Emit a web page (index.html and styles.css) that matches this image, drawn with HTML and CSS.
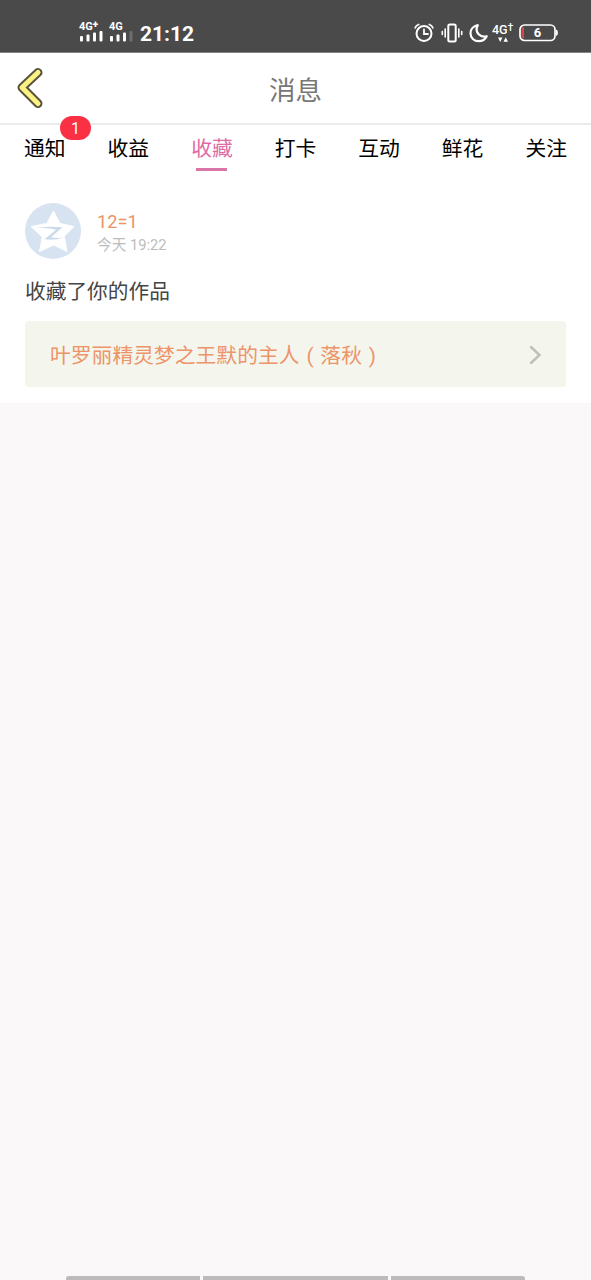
FILE: index.html
```html
<!DOCTYPE html>
<html lang="zh-CN">
<head>
<meta charset="utf-8">
<title>消息</title>
<link rel="stylesheet" href="styles.css">
</head>
<body>
<div class="statusbar">
  <div class="status-left">
    <div class="sim"><span class="net">4G<b>+</b></span>
      <svg width="24" height="12" viewBox="0 0 24 12" fill="#fff"><rect x="1" y="6" width="3" height="5.500" rx="1"/><rect x="7.500" y="4.500" width="3" height="7" rx="1"/><rect x="14" y="2.500" width="3" height="9" rx="1"/><rect x="20.500" y="1" width="3" height="10.500" rx="1"/></svg>
    </div>
    <div class="sim"><span class="net">4G</span>
      <svg width="24" height="12" viewBox="0 0 24 12" fill="#fff"><rect x="1" y="6" width="3" height="5.500" rx="1"/><rect x="7.500" y="4.500" width="3" height="7" rx="1"/><rect x="14" y="2.500" width="3" height="9" rx="1"/><rect x="20.500" y="1" width="3" height="10.500" rx="1" opacity=".2"/></svg>
    </div>
    <span class="clock">21:12</span>
  </div>
  <div class="status-right">
    <svg width="20" height="20" viewBox="0 0 20 20" fill="none" stroke="#fff" stroke-linecap="round"><circle cx="10" cy="10.500" r="7.500" stroke-width="2"/><path d="M10 6.500v4.500h4" stroke-width="1.800"/><path d="M1.200 4.800C1.700 3.300 3 2 4.600 1.500M18.800 4.800C18.300 3.300 17 2 15.400 1.500" stroke-width="1.800"/></svg>
    <svg class="vibrate" width="22" height="20" viewBox="0 0 22 20" fill="none" stroke="#fff" stroke-width="2" stroke-linecap="round"><rect x="7.300" y="1.500" width="7.400" height="17" rx="1.500"/><path d="M4.200 6v8M17.800 6v8M1.300 8.500v3M20.700 8.500v3" stroke-width="1.600"/></svg>
    <svg class="moon" width="20" height="20" viewBox="0 0 20 20" fill="none" stroke="#fff" stroke-width="2.200" stroke-linejoin="round"><path d="M8.800 2.200C4.500 3 1.500 6.300 1.500 10.300c0 4.500 3.500 7.900 8.200 7.900 3.600 0 6.500-1.900 8-5-3 .8-6 .2-8-1.900-2.300-2.400-2.600-6-.9-9.100z"/></svg>
    <div class="data"><span>4G<b>†</b></span><svg width="10" height="5" viewBox="0 0 10 5" fill="#fff"><path d="M0 .5h4.500L2.200 5zM5.500 4.800H10L7.700.3z"/></svg></div>
    <div class="battery"><svg width="39" height="18" viewBox="0 0 39 18"><rect x="1" y="1" width="35" height="15.500" rx="4.500" fill="none" stroke="#fff" stroke-width="1.700"/><path d="M2.500 5Q2.800 3 5 3v11.500Q2.800 14.500 2.500 12.500z" fill="#d94848"/><path d="M37 5.500q2 .5 2 3.200t-2 3.200z" fill="#fff"/></svg><span>6</span></div>
  </div>
</div>
<header class="header">
  <svg class="back" width="28" height="42" viewBox="0 0 28 42" fill="none" stroke-linecap="round" stroke-linejoin="round"><path d="M22 5.500L6 20.500 22 36.500" stroke="#58543e" stroke-width="9"/><path d="M22 5.500L6 20.500 22 36.500" stroke="#fbf283" stroke-width="5"/></svg>
  <h1>消息</h1>
</header>
<nav class="tabs">
  <a>通知<span class="badge">1</span></a><a>收益</a><a class="active">收藏</a><a>打卡</a><a>互动</a><a>鲜花</a><a>关注</a>
</nav>
<main class="message">
  <div class="user">
    <svg class="avatar" width="56" height="56" viewBox="0 0 56 56"><circle cx="28" cy="28" r="28" fill="#d7e3f0"/><path d="M28.500 8L34.500 19.500Q35 20.500 36 20.700L49 23.500 40 32.500Q39.300 33.300 39.500 34.500L42 48.500 28.500 42 14.500 48.500 17.200 34 6 23.500 20.500 20.700Q21.700 20.500 22.200 19.500z" fill="#fff" stroke="#fff" stroke-linejoin="round"/><path d="M11.500 24.600Q25 23.300 37.500 24.200L26 34.200Q33 35.500 38 34.500Q31 37.600 19.500 36.300L31 26.700Q23 25 11.500 24.600z" fill="#cbdbea"/></svg>
    <div class="meta"><span class="name">12=1</span><span class="time">今天 19:22</span></div>
  </div>
  <p class="action">收藏了你的作品</p>
  <div class="work"><span class="work-title">叶罗丽精灵梦之王默的主人<span class="paren">(</span>落秋<span class="paren">)</span></span>
    <svg width="14" height="20" viewBox="0 0 14 20" fill="none" stroke="#bfc0ba" stroke-width="2.500" stroke-linecap="round"><path d="M3 2l8.500 8L3 18"/></svg>
  </div>
</main>
<div class="gesture"><i></i><i class="mid"></i><i></i></div>
</body>
</html>
```
FILE: styles.css
```css
* { box-sizing: border-box; }
body {
  margin: 0;
  height: 1280px;
  overflow: hidden;
  display: flex;
  flex-direction: column;
  background: #faf8f9;
  font-family: Roboto, "Noto Sans CJK SC", sans-serif;
}
svg { display: block; flex: none; }
.statusbar {
  height: 53px;
  flex: none;
  display: flex;
  justify-content: space-between;
  padding: 0 33px 0 79px;
  background: #4a4a4a;
  border-bottom: 1px solid #858585;
  color: #fff;
}
.status-left { display: flex; }
.sim { width: 30px; padding-top: 21px; }
.net { display: flex; height: 9px; font: 700 11px/11px Roboto, sans-serif; }
.net b { font-size: 10px; line-height: 8px; }
.clock { padding-top: 21px; margin-left: 1px; font: 700 21px/26px Roboto, sans-serif; }
.status-right { display: flex; padding-top: 23px; }
.vibrate { margin-left: 7px; }
.moon { margin-left: 6px; }
.data { width: 21px; margin-left: 3px; font: 500 12.500px/13px Roboto, sans-serif; }
.data span { display: flex; }
.data b { font-size: 10px; line-height: 10px; font-weight: 500; }
.data svg { margin: 1px auto 0; }
.battery { position: relative; margin-left: 6px; padding-top: 1px; }
.battery span { position: absolute; left: 0; top: 1px; width: 37px; text-align: center; font: 700 13px/18px Roboto, sans-serif; }
.header {
  height: 72px;
  flex: none;
  display: grid;
  grid-template-columns: 46px 1fr 46px;
  align-items: center;
  background: #fff;
  border-bottom: 2px solid #ebebeb;
}
.back { margin-left: 16px; }
.header h1 { margin: 0; padding-top: 5px; text-align: center; font-size: 26.500px; line-height: 40px; font-weight: 400; color: #777; }
.tabs {
  height: 55px;
  flex: none;
  display: grid;
  grid-template-columns: repeat(7, 1fr);
  padding: 0 3px;
  background: #fff;
  font-size: 20.800px;
  line-height: 48px;
  text-align: center;
  color: #000;
}
.tabs a { position: relative; height: 46px; }
.tabs .active { color: #e06ba4; }
.active::after { content: ""; position: absolute; left: 50%; bottom: 0; width: 31px; height: 3px; margin-left: -16px; background: #d976a5; }
.badge { position: absolute; left: 57px; top: -9px; width: 31px; height: 24px; border-radius: 12px; background: #fb3044; color: #fff; font-size: 16px; line-height: 26px; }
.message { height: 223px; flex: none; padding: 23px 25px 0; background: #fff; }
.user { display: flex; }
.meta { padding: 7px 0 0 16px; display: flex; flex-direction: column; }
.name { font-size: 18.200px; line-height: 24px; color: #eb9367; }
.time { font-size: 14.700px; line-height: 22px; color: #bcbcbc; }
.action { margin: 17px 0 0; font-size: 20.700px; line-height: 32px; color: #444; }
.work {
  height: 66px;
  margin-top: 13px;
  padding: 2px 24px 0 25px;
  display: flex;
  align-items: center;
  justify-content: space-between;
  border-radius: 4px;
  background: #f4f6ee;
  color: #ed9468;
  font-size: 20.800px;
  line-height: 32px;
}
.work-title { padding-top: 1px; }
.paren { display: inline-block; width: 20.800px; text-align: center; }
.gesture { margin-top: auto; height: 4px; display: flex; gap: 3px; padding: 0 66px; }
.gesture i { flex: 134; background: #bbb; }
.gesture .mid { flex: 185; }
.gesture i:first-child { border-radius: 3px 0 0 0; }
.gesture i:last-child { border-radius: 0 3px 0 0; }
```
